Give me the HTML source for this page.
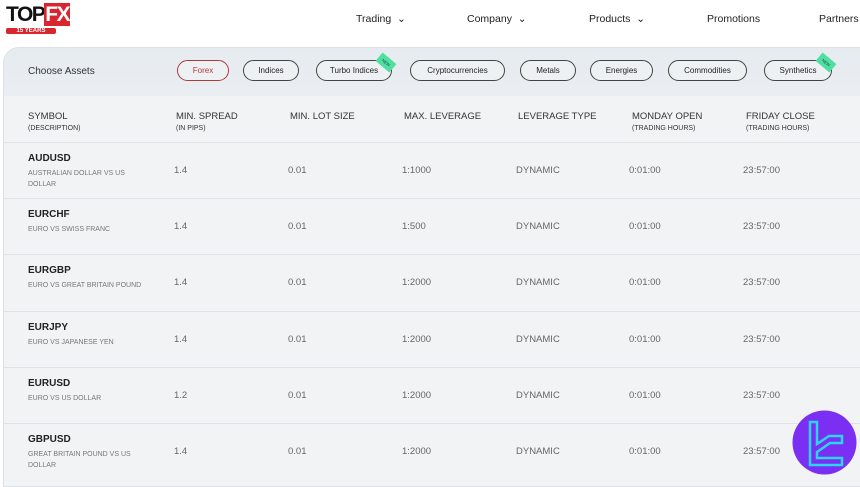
<!DOCTYPE html>
<html><head><style>
*{margin:0;padding:0;box-sizing:border-box}
body{width:860px;height:480px;overflow:hidden;background:#fff;font-family:"Liberation Sans",sans-serif;position:relative;color:#333}
.logo{position:absolute;left:6px;top:3px}
.nav{position:absolute;top:13px;font-size:10.5px;color:#222}
.card{position:absolute;left:3px;top:47px;width:860px;height:440px;background:#f1f3f5;border-radius:16px 0 0 0;border:1px solid #dde1e5;overflow:hidden}
.top{height:48px;background:linear-gradient(#e6ebf0,#eaeef2);position:relative}
.ca{position:absolute;left:24px;top:18px;font-size:10px;color:#333}
.pill{position:absolute;top:12px;height:21px;border:1.3px solid #444;border-radius:11px;font-size:8px;line-height:19px;text-align:center;color:#222;background:#eef1f4}
.new{position:absolute;right:-4px;top:-4px;width:18px;height:11px;background:#4fe0a0;transform:rotate(40deg);font-size:4px;line-height:11px;color:#135}
.th{position:absolute;font-size:9.5px;color:#333}
.th small{display:block;font-size:7px;margin-top:3px}
.row{position:absolute;left:0;width:860px;height:56px;border-top:1px solid #dfe2e6}
.c{position:absolute;top:22px;font-size:9.5px;color:#666}
.sym{position:absolute;left:24px;top:10px;font-size:10px;font-weight:bold;color:#222}
.desc{position:absolute;left:24px;top:25px;font-size:7px;color:#777;width:125px;line-height:11px}
</style></head><body>
<div class="logo">
<div style="font:bold 21px 'Liberation Sans';color:#111;letter-spacing:-1.5px">TOP<span style="background:#d9262e;color:#fff;padding:0 1px">FX</span></div>
<div style="background:#d9262e;color:#fff;font-size:6px;font-weight:bold;width:50px;text-align:center;margin-top:1px;border-radius:2px">15 YEARS</div>
</div>
<div class="nav" style="left:356px">Trading &nbsp;⌄</div>
<div class="nav" style="left:467px">Company &nbsp;⌄</div>
<div class="nav" style="left:589px">Products &nbsp;⌄</div>
<div class="nav" style="left:707px">Promotions</div>
<div class="nav" style="left:819px">Partners</div>
<div class="card">
<div class="top">
<div class="ca">Choose Assets</div>
<div class="pill" style="left:173px;width:52px;border-color:#b03a3a;color:#b03a3a">Forex</div>
<div class="pill" style="left:239px;width:56px">Indices</div>
<div class="pill" style="left:312px;width:76px;overflow:visible">Turbo Indices<div class="new">NEW</div></div>
<div class="pill" style="left:406px;width:95px">Cryptocurrencies</div>
<div class="pill" style="left:516px;width:56px">Metals</div>
<div class="pill" style="left:586px;width:63px">Energies</div>
<div class="pill" style="left:664px;width:79px">Commodities</div>
<div class="pill" style="left:760px;width:68px;overflow:visible">Synthetics<div class="new">NEW</div></div>
</div>
<div class="th" style="left:24px;top:63px">SYMBOL<small>(DESCRIPTION)</small></div>
<div class="th" style="left:172px;top:63px">MIN. SPREAD<small>(IN PIPS)</small></div>
<div class="th" style="left:286px;top:63px">MIN. LOT SIZE</div>
<div class="th" style="left:400px;top:63px">MAX. LEVERAGE</div>
<div class="th" style="left:514px;top:63px">LEVERAGE TYPE</div>
<div class="th" style="left:628px;top:63px">MONDAY OPEN<small>(TRADING HOURS)</small></div>
<div class="th" style="left:742px;top:63px">FRIDAY CLOSE<small>(TRADING HOURS)</small></div>
<div class="row" style="top:94px"><div class="sym">AUDUSD</div><div class="desc">AUSTRALIAN DOLLAR VS US DOLLAR</div><div class="c" style="left:170px">1.4</div><div class="c" style="left:284px">0.01</div><div class="c" style="left:398px">1:1000</div><div class="c" style="left:512px">DYNAMIC</div><div class="c" style="left:625px">0:01:00</div><div class="c" style="left:739px">23:57:00</div></div>
<div class="row" style="top:150px"><div class="sym">EURCHF</div><div class="desc">EURO VS SWISS FRANC</div><div class="c" style="left:170px">1.4</div><div class="c" style="left:284px">0.01</div><div class="c" style="left:398px">1:500</div><div class="c" style="left:512px">DYNAMIC</div><div class="c" style="left:625px">0:01:00</div><div class="c" style="left:739px">23:57:00</div></div>
<div class="row" style="top:206px"><div class="sym">EURGBP</div><div class="desc">EURO VS GREAT BRITAIN POUND</div><div class="c" style="left:170px">1.4</div><div class="c" style="left:284px">0.01</div><div class="c" style="left:398px">1:2000</div><div class="c" style="left:512px">DYNAMIC</div><div class="c" style="left:625px">0:01:00</div><div class="c" style="left:739px">23:57:00</div></div>
<div class="row" style="top:263px"><div class="sym">EURJPY</div><div class="desc">EURO VS JAPANESE YEN</div><div class="c" style="left:170px">1.4</div><div class="c" style="left:284px">0.01</div><div class="c" style="left:398px">1:2000</div><div class="c" style="left:512px">DYNAMIC</div><div class="c" style="left:625px">0:01:00</div><div class="c" style="left:739px">23:57:00</div></div>
<div class="row" style="top:319px"><div class="sym">EURUSD</div><div class="desc">EURO VS US DOLLAR</div><div class="c" style="left:170px">1.2</div><div class="c" style="left:284px">0.01</div><div class="c" style="left:398px">1:2000</div><div class="c" style="left:512px">DYNAMIC</div><div class="c" style="left:625px">0:01:00</div><div class="c" style="left:739px">23:57:00</div></div>
<div class="row" style="top:375px"><div class="sym">GBPUSD</div><div class="desc">GREAT BRITAIN POUND VS US DOLLAR</div><div class="c" style="left:170px">1.4</div><div class="c" style="left:284px">0.01</div><div class="c" style="left:398px">1:2000</div><div class="c" style="left:512px">DYNAMIC</div><div class="c" style="left:625px">0:01:00</div><div class="c" style="left:739px">23:57:00</div></div>
</div>
<svg style="position:absolute;left:792px;top:410px" width="65" height="65" viewBox="0 0 65 65">
<circle cx="32.5" cy="32.5" r="32" fill="#7b2ff2"/>
<path d="M18 12h7v22l12-8h13v7h-12l-13 9v6h25v7h-32z" fill="none" stroke="#2ad6f5" stroke-width="2.5" stroke-linejoin="miter"/>
</svg>
</body></html>
